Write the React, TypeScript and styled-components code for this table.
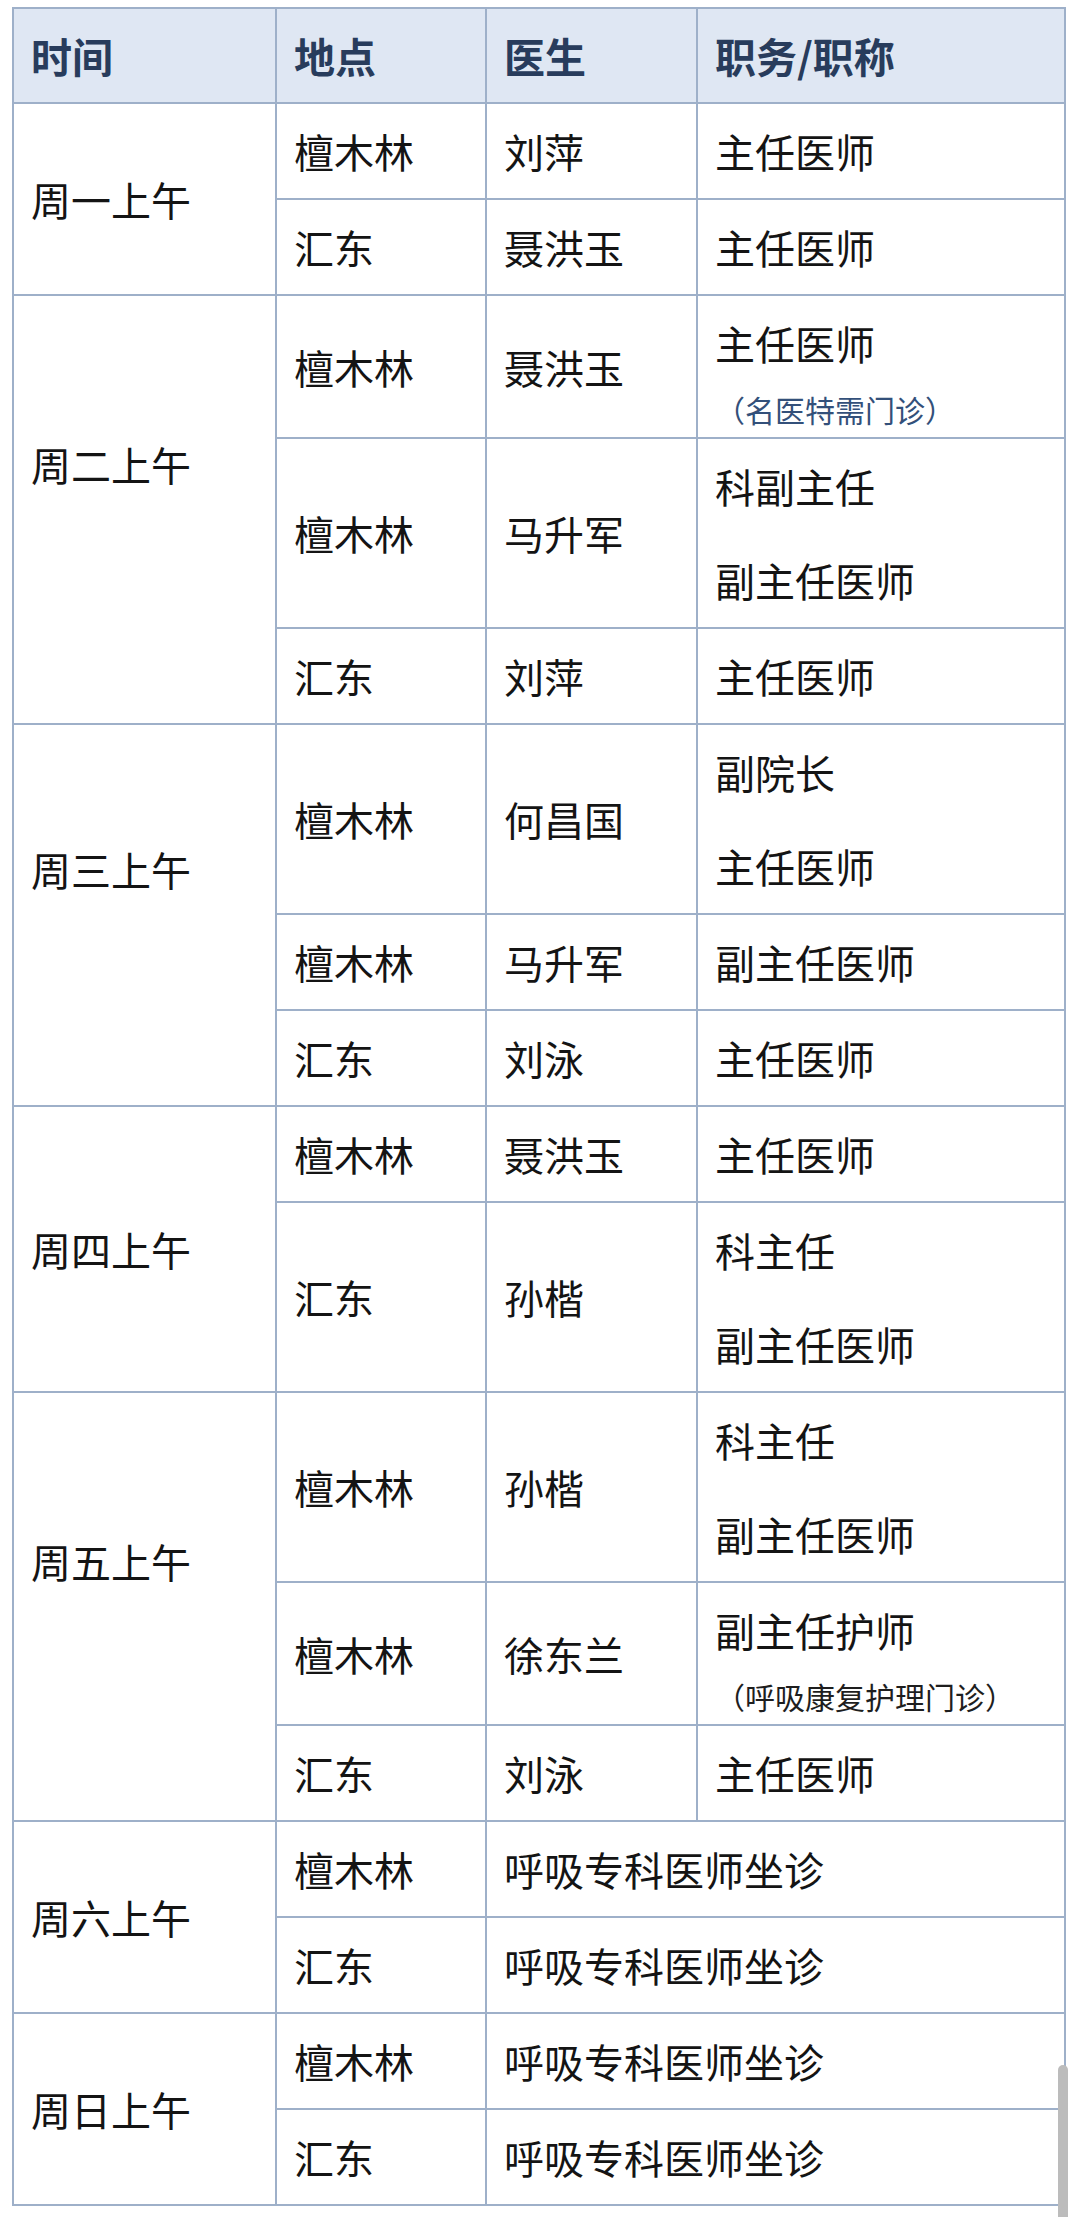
import React from "react";
import styled, { createGlobalStyle } from "styled-components";

type Duty = { place: string; doctor?: string; lines: string[]; note?: string; noteBlue?: boolean; span?: boolean };
type Day = { day: string; lift?: boolean; rows: Duty[] };

const schedule: Day[] = [
  {
    day: "周一上午",
    rows: [
      { place: "檀木林", doctor: "刘萍", lines: ["主任医师"] },
      { place: "汇东", doctor: "聂洪玉", lines: ["主任医师"] },
    ],
  },
  {
    day: "周二上午",
    lift: true,
    rows: [
      { place: "檀木林", doctor: "聂洪玉", lines: ["主任医师"], note: "（名医特需门诊）", noteBlue: true },
      { place: "檀木林", doctor: "马升军", lines: ["科副主任", "副主任医师"] },
      { place: "汇东", doctor: "刘萍", lines: ["主任医师"] },
    ],
  },
  {
    day: "周三上午",
    lift: true,
    rows: [
      { place: "檀木林", doctor: "何昌国", lines: ["副院长", "主任医师"] },
      { place: "檀木林", doctor: "马升军", lines: ["副主任医师"] },
      { place: "汇东", doctor: "刘泳", lines: ["主任医师"] },
    ],
  },
  {
    day: "周四上午",
    rows: [
      { place: "檀木林", doctor: "聂洪玉", lines: ["主任医师"] },
      { place: "汇东", doctor: "孙楷", lines: ["科主任", "副主任医师"] },
    ],
  },
  {
    day: "周五上午",
    lift: true,
    rows: [
      { place: "檀木林", doctor: "孙楷", lines: ["科主任", "副主任医师"] },
      { place: "檀木林", doctor: "徐东兰", lines: ["副主任护师"], note: "（呼吸康复护理门诊）" },
      { place: "汇东", doctor: "刘泳", lines: ["主任医师"] },
    ],
  },
  {
    day: "周六上午",
    rows: [
      { place: "檀木林", lines: ["呼吸专科医师坐诊"], span: true },
      { place: "汇东", lines: ["呼吸专科医师坐诊"], span: true },
    ],
  },
  {
    day: "周日上午",
    rows: [
      { place: "檀木林", lines: ["呼吸专科医师坐诊"], span: true },
      { place: "汇东", lines: ["呼吸专科医师坐诊"], span: true },
    ],
  },
];

function App() {
  return (
    <Page>
      <GlobalStyle />
      <Table>
        <colgroup>
          <col style={{ width: 263 }} />
          <col style={{ width: 210 }} />
          <col style={{ width: 211 }} />
          <col />
        </colgroup>
        <thead>
          <tr>
            <Head>时间</Head>
            <Head>地点</Head>
            <Head>医生</Head>
            <Head>职务/职称</Head>
          </tr>
        </thead>
        <tbody>
          {schedule.map((d) =>
            d.rows.map((r, i) => (
              <tr key={d.day + i}>
                {i === 0 && (
                  <DayCell rowSpan={d.rows.length} $lift={d.lift}>
                    {d.day}
                  </DayCell>
                )}
                <Cell>{r.place}</Cell>
                {r.span ? (
                  <Cell colSpan={2}>{r.lines[0]}</Cell>
                ) : (
                  <>
                    <Cell>{r.doctor}</Cell>
                    <Cell>
                      {r.lines.map((l) => (
                        <Line key={l}>{l}</Line>
                      ))}
                      {r.note && <Note $blue={r.noteBlue}>{r.note}</Note>}
                    </Cell>
                  </>
                )}
              </tr>
            ))
          )}
        </tbody>
      </Table>
      <ScrollThumb />
    </Page>
  );
}

const GlobalStyle = createGlobalStyle`
  html, body {
    margin: 0;
    background: #ffffff;
  }
  body {
    font-family: "Noto Sans CJK SC", "Noto Sans", sans-serif;
  }
`;

const Page = styled.div`
  position: relative;
  width: 1080px;
  height: 2217px;
  padding: 7px 0 0 12px;
  box-sizing: border-box;
  overflow: hidden;
`;

const Table = styled.table`
  width: 1054px;
  border-collapse: collapse;
  table-layout: fixed;
  border: 2px solid #9eb0c9;
`;

const Head = styled.th`
  background: #dfe7f3;
  color: #283c5c;
  font-size: 41px;
  font-weight: 700;
  text-align: left;
  line-height: 93px;
  padding: 0 17px;
  border: 2px solid #9eb0c9;
`;

const Cell = styled.td`
  color: #141414;
  font-size: 40px;
  font-weight: 400;
  line-height: 94px;
  padding: 0 17px;
  vertical-align: middle;
  border: 2px solid #9eb0c9;
  white-space: nowrap;
`;

const DayCell = styled(Cell)<{ $lift?: boolean }>`
  padding-bottom: ${(p) => (p.$lift ? "92px" : "0")};
`;

const Line = styled.div`
  line-height: 94px;
`;

const Note = styled.div<{ $blue?: boolean }>`
  font-size: 30px;
  line-height: 47px;
  margin-top: -4px;
  margin-bottom: 4px;
  color: ${(p) => (p.$blue ? "#33507a" : "#1e1e1e")};
`;

const ScrollThumb = styled.div`
  position: absolute;
  left: 1058px;
  top: 2065px;
  width: 10px;
  height: 160px;
  border-radius: 5px 5px 0 0;
  background: #bcbcbc;
`;

export default App;
